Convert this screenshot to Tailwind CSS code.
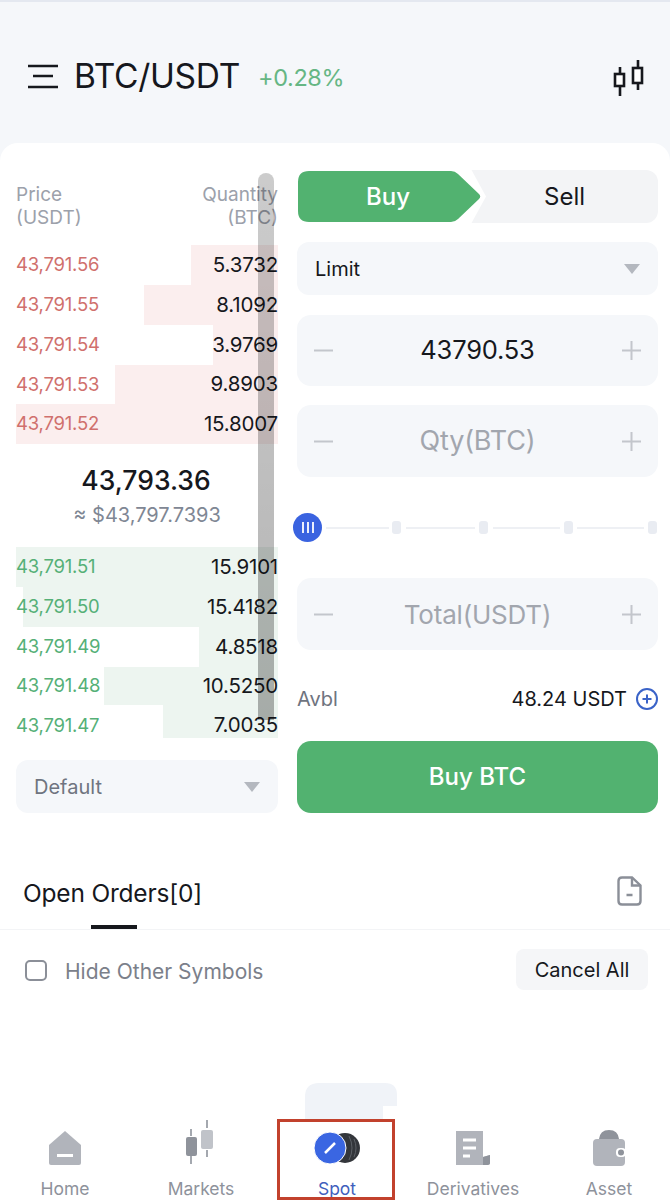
<!DOCTYPE html>
<html lang="en">
<head>
  <meta charset="UTF-8">
  <meta name="viewport" content="width=device-width,initial-scale=1.0">
  <title>BTC/USDT Spot</title>
  <script src="https://cdn.jsdelivr.net/npm/@tailwindcss/browser@4"></script>
</head>
<body class="bg-white font-['Inter',sans-serif] text-[#16181d]">
<div class="relative w-[670px] h-[1200px] overflow-hidden bg-[#f5f7fa]">

  <!-- header -->
  <header class="h-[148px] flex items-start pt-[56px] border-t-2 border-[#e4e8f0]">
    <svg class="ml-[27px] mt-[5px] w-[32px] h-[26px]" viewBox="0 0 32 26" fill="none" stroke="#16181d" stroke-width="2.6">
      <path d="M1 3H31M6 13H26M1 24H31"/>
    </svg>
    <h1 class="ml-[15px] text-[33.5px] leading-[36px] tracking-[-0.3px]">BTC/USDT</h1>
    <span class="ml-[18px] mt-[4px] text-[23.5px] leading-[32px] text-[#66b684] tracking-[-0.4px]">+0.28%</span>
    <svg class="ml-auto mr-[24px] mt-[2px] w-[34px] h-[36px]" viewBox="0 0 34 36" fill="none" stroke="#16181d" stroke-width="2.6">
      <path d="M8 7V14M8 27V36M26 0V7M26 24V30"/>
      <rect x="3" y="14" width="9" height="12" fill="#fff"/>
      <rect x="21" y="8" width="9" height="15" fill="#fff"/>
    </svg>
  </header>

  <!-- main card -->
  <main class="bg-white rounded-t-[18px] h-[1060px] -mt-[5px]">
    <div class="flex pt-[27px] pl-[16px]">
      <!-- order book -->
      <section class="w-[262px]">
        <div class="flex justify-between text-[19px] leading-[23px] text-[#9ca1ab] h-[75px] pt-[13px]">
          <div>Price<br>(USDT)</div>
          <div class="text-right">Quantity<br>(BTC)</div>
        </div>
        <div class="text-[20.5px] tracking-[-0.2px]">
          <div class="relative h-[40px] flex items-center justify-between"><i class="absolute inset-y-0 right-0 w-[87px] bg-[#fbeeee]"></i><span class="relative text-[18.5px] text-[#d0706d]">43,791.56</span><span class="relative">5.3732</span></div>
          <div class="relative h-[40px] flex items-center justify-between"><i class="absolute inset-y-0 right-0 w-[134px] bg-[#fbeeee]"></i><span class="relative text-[18.5px] text-[#d0706d]">43,791.55</span><span class="relative">8.1092</span></div>
          <div class="relative h-[40px] flex items-center justify-between"><i class="absolute inset-y-0 right-0 w-[65px] bg-[#fbeeee]"></i><span class="relative text-[18.5px] text-[#d0706d]">43,791.54</span><span class="relative">3.9769</span></div>
          <div class="relative h-[39px] flex items-center justify-between"><i class="absolute inset-y-0 right-0 w-[163px] bg-[#fbeeee]"></i><span class="relative text-[18.5px] text-[#d0706d]">43,791.53</span><span class="relative">9.8903</span></div>
          <div class="relative h-[40px] flex items-center justify-between"><i class="absolute inset-y-0 right-0 w-[262px] bg-[#fbeeee]"></i><span class="relative text-[18.5px] text-[#d0706d]">43,791.52</span><span class="relative">15.8007</span></div>
        </div>
        <div class="h-[103px] flex flex-col items-center pt-[18px]">
          <div class="text-[26.5px] leading-[36px] font-medium -ml-[2px]">43,793.36</div>
          <div class="text-[20px] leading-[26px] mt-[4px] text-[#7f8794]">≈ $43,797.7393</div>
        </div>
        <div class="text-[20.5px] tracking-[-0.2px]">
          <div class="relative h-[40px] flex items-center justify-between"><i class="absolute inset-y-0 right-0 w-[262px] bg-[#edf5f0]"></i><span class="relative text-[18.5px] text-[#55b077]">43,791.51</span><span class="relative">15.9101</span></div>
          <div class="relative h-[40px] flex items-center justify-between"><i class="absolute inset-y-0 right-0 w-[255px] bg-[#edf5f0]"></i><span class="relative text-[18.5px] text-[#55b077]">43,791.50</span><span class="relative">15.4182</span></div>
          <div class="relative h-[40px] flex items-center justify-between"><i class="absolute inset-y-0 right-0 w-[79px] bg-[#edf5f0]"></i><span class="relative text-[18.5px] text-[#55b077]">43,791.49</span><span class="relative">4.8518</span></div>
          <div class="relative h-[38px] flex items-center justify-between"><i class="absolute inset-y-0 right-0 w-[174px] bg-[#edf5f0]"></i><span class="relative text-[18.5px] text-[#55b077]">43,791.48</span><span class="relative">10.5250</span></div>
          <div class="relative h-[33px] flex items-center justify-between"><i class="absolute inset-y-0 right-0 w-[115px] bg-[#edf5f0]"></i><span class="relative mt-[8px] text-[18.5px] text-[#55b077]">43,791.47</span><span class="relative mt-[8px]">7.0035</span></div>
        </div>
        <div class="mt-[22px] h-[53px] rounded-[12px] bg-[#f5f7fa] flex items-center justify-between px-[18px] text-[20px] text-[#6f7480]">
          <span>Default</span>
          <svg class="w-[16px] h-[10px]" viewBox="0 0 16 10"><path d="M0 0H16L8 10Z" fill="#b4b8bf"/></svg>
        </div>
      </section>

      <!-- trade form -->
      <section class="ml-[19px] w-[361px]">
        <div class="relative flex h-[53px] text-[24px]">
          <div class="relative z-10 w-[186px] flex items-center justify-center pr-[4px] text-white font-medium">
            <svg class="absolute inset-0 w-[186px] h-[53px]" viewBox="0 0 186 53" fill="none"><path d="M12 1H154Q158 1 161 4L182 24Q184.500 26.500 182 29L161 49Q158 52 154 52H12Q1 52 1 41V12Q1 1 12 1Z" fill="#52b270"/></svg>
            <span class="relative">Buy</span>
          </div>
          <div class="flex-1 -ml-[12px] rounded-r-[12px] bg-[#f3f4f6] relative flex items-center justify-center">
            <svg class="absolute left-0 top-0 w-[15px] h-[53px]" viewBox="0 0 15 53"><path d="M0 0H0.500L15 26.500L0.500 53H0Z" fill="#fff"/></svg>
            <span class="relative">Sell</span>
          </div>
        </div>

        <div class="mt-[19px] h-[53px] rounded-[12px] bg-[#f5f7fa] flex items-center justify-between pl-[18px] pr-[18px] text-[20px]">
          <span>Limit</span>
          <svg class="w-[16px] h-[10px]" viewBox="0 0 16 10"><path d="M0 0H16L8 10Z" fill="#b4b8bf"/></svg>
        </div>

        <div class="mt-[20px] h-[71px] rounded-[14px] bg-[#f5f7fa] flex items-center justify-between px-[17px]">
          <svg class="w-[19px] h-[19px]" viewBox="0 0 19 19" stroke="#c3c6cc" stroke-width="2"><path d="M0 9.500H19"/></svg>
          <span class="text-[25.5px] tracking-[-0.2px]">43790.53</span>
          <svg class="w-[19px] h-[19px]" viewBox="0 0 19 19" stroke="#c3c6cc" stroke-width="2"><path d="M0 9.500H19M9.500 0V19"/></svg>
        </div>

        <div class="mt-[19px] h-[72px] rounded-[14px] bg-[#f5f7fa] flex items-center justify-between px-[17px]">
          <svg class="w-[19px] h-[19px]" viewBox="0 0 19 19" stroke="#c3c6cc" stroke-width="2"><path d="M0 9.500H19"/></svg>
          <span class="text-[27px] tracking-[-0.2px] text-[#a2a6ae]">Qty(BTC)</span>
          <svg class="w-[19px] h-[19px]" viewBox="0 0 19 19" stroke="#c3c6cc" stroke-width="2"><path d="M0 9.500H19M9.500 0V19"/></svg>
        </div>

        <!-- slider -->
        <div class="relative mt-[36px] h-[29px] -ml-[4px] flex items-center">
          <div class="w-[29px] h-[29px] rounded-full bg-[#3a63e0] flex items-center justify-center gap-[3px] shrink-0">
            <i class="w-[2px] h-[11px] bg-white/90"></i><i class="w-[2px] h-[11px] bg-white/90"></i><i class="w-[2px] h-[11px] bg-white/90"></i>
          </div>
          <div class="ml-[4px] w-[63px] h-[2px] bg-[#eef0f4]"></div>
          <div class="ml-[3px] w-[9px] h-[13px] rounded-[3px] bg-[#e9ecf2]"></div>
          <div class="ml-[5px] w-[69px] h-[2px] bg-[#eef0f4]"></div>
          <div class="ml-[4px] w-[9px] h-[13px] rounded-[3px] bg-[#e9ecf2]"></div>
          <div class="ml-[5px] w-[67px] h-[2px] bg-[#eef0f4]"></div>
          <div class="ml-[4px] w-[9px] h-[13px] rounded-[3px] bg-[#e9ecf2]"></div>
          <div class="ml-[4px] w-[67px] h-[2px] bg-[#eef0f4]"></div>
          <div class="ml-[4px] w-[9px] h-[13px] rounded-[3px] bg-[#e9ecf2]"></div>
        </div>

        <div class="mt-[36px] h-[72px] rounded-[14px] bg-[#f5f7fa] flex items-center justify-between px-[17px]">
          <svg class="w-[19px] h-[19px]" viewBox="0 0 19 19" stroke="#c3c6cc" stroke-width="2"><path d="M0 9.500H19"/></svg>
          <span class="text-[26px] tracking-[-0.2px] text-[#a2a6ae]">Total(USDT)</span>
          <svg class="w-[19px] h-[19px]" viewBox="0 0 19 19" stroke="#c3c6cc" stroke-width="2"><path d="M0 9.500H19M9.500 0V19"/></svg>
        </div>

        <div class="mt-[35px] h-[28px] flex items-center text-[20px]">
          <span class="text-[#6f7480]">Avbl</span>
          <span class="ml-auto">48.24 USDT</span>
          <svg class="ml-[9px] w-[22px] h-[22px]" viewBox="0 0 22 22" fill="none" stroke="#3a63c8" stroke-width="2"><circle cx="11" cy="11" r="10"/><path d="M6.500 11H15.500M11 6.500V15.500"/></svg>
        </div>

        <div class="mt-[28px] h-[72px] rounded-[14px] bg-[#52b270] flex items-center justify-center text-[24px] font-medium text-white">Buy BTC</div>
      </section>
    </div>

    <!-- open orders -->
    <div class="mt-[48px] h-[69px] flex items-start justify-between pl-[23px] pr-[28px] border-b border-[#f3f4f6] relative">
      <span class="text-[24.5px] leading-[36px] mt-[14px] tracking-[-0.2px]">Open Orders[0]</span>
      <svg class="mt-[15px] w-[25px] h-[30px]" viewBox="0 0 25 30" fill="none" stroke="#8b8f98" stroke-width="2.400">
        <path d="M5 1.500H15L23.500 9.500V25Q23.500 28.500 20 28.500H5Q1.500 28.500 1.500 25V5Q1.500 1.500 5 1.500Z"/>
        <path d="M15 1.500V9.500H23.500M9.500 19H15.500"/>
      </svg>
      <i class="absolute left-[91px] bottom-[0px] w-[46px] h-[4px] bg-[#16181d]"></i>
    </div>
    <div class="flex items-center pl-[25px] pr-[22px] mt-[19px]">
      <div class="w-[22px] h-[21px] mt-[2px] rounded-[5px] border-2 border-[#8b8f98]"></div>
      <span class="ml-[18px] mt-[4px] text-[21px] text-[#7b808a]">Hide Other Symbols</span>
      <div class="ml-auto w-[132px] h-[41px] rounded-[8px] bg-[#f5f6f8] flex items-center justify-center text-[20px]">Cancel All</div>
    </div>
  </main>

  <!-- scrollbar over the order book -->
  <div class="absolute left-[258px] top-[173px] w-[16px] h-[547px] rounded-t-[8px] bg-linear-to-b from-black/20 to-black/30"></div>

  <!-- faded card behind the tab bar -->
  <svg class="absolute left-[305px] top-[1083px] w-[92px] h-[37px]" viewBox="0 0 92 37"><path d="M0 37V14Q0 0 14 0H80Q92 0 92 12V23H78V37Z" fill="#f0f3f8"/></svg>

  <!-- tab bar -->
  <nav class="absolute -left-[3px] w-[680px] bottom-0 h-[70px] grid grid-cols-5 text-[17.5px] text-[#8e929b] text-center">
    <div class="flex flex-col items-center">
      <svg class="w-[34px] h-[36px]" viewBox="0 0 34 36"><path d="M17 1L33 15V33Q33 35 31 35H3Q1 35 1 33V15Z" fill="#b1b4bb"/><rect x="9" y="24" width="16" height="3" fill="#fff"/></svg>
      <span class="mt-[10px]">Home</span>
    </div>
    <div class="flex flex-col items-center">
      <svg class="w-[30px] h-[46px] -mt-[10px]" viewBox="0 0 30 46"><path d="M5 9V16M5 36V44M21 0V8M21 30V37" stroke="#a4a8af" stroke-width="2"/><rect x="0" y="17" width="11" height="19" rx="2" fill="#8f939b"/><rect x="15" y="10" width="12" height="19" rx="2" fill="#c0c3c9"/></svg>
      <span class="mt-[10px]">Markets</span>
    </div>
    <div class="flex flex-col items-center text-[#3f5fbd]">
      <svg class="w-[48px] h-[36px]" viewBox="0 0 48 36"><circle cx="32" cy="18" r="15" fill="#33363b"/><path d="M36 6Q42 18 36 30M41 9Q45 18 41 27" fill="none" stroke="#5c6066" stroke-width="1"/><circle cx="17" cy="18" r="16" fill="#3a66e2" stroke="#fff" stroke-width="1"/><path d="M12 23L22 13" stroke="#fff" stroke-width="2.500"/></svg>
      <span class="mt-[10px]">Spot</span>
    </div>
    <div class="flex flex-col items-center">
      <svg class="w-[36px] h-[36px]" viewBox="0 0 36 36"><path d="M1 1H28V27L35 25V33Q35 35 33 35H1Z" fill="#b1b4bb"/><path d="M28 27L35 25V33Q35 35 31 35H28Z" fill="#8f939b"/><path d="M8 10H21M8 18H21M8 26H15" stroke="#fff" stroke-width="3"/></svg>
      <span class="mt-[10px]">Derivatives</span>
    </div>
    <div class="flex flex-col items-center">
      <svg class="w-[34px] h-[38px] -mt-[1px]" viewBox="0 0 34 38"><path d="M7 10Q8 1 17 1Q26 1 27 10Z" fill="#8f939b"/><rect x="1" y="10" width="32" height="27" rx="4" fill="#b1b4bb"/><rect x="24" y="19" width="10" height="9" rx="4" fill="#fff"/><circle cx="29" cy="23.500" r="3" fill="#8f939b"/></svg>
      <span class="mt-[9px]">Asset</span>
    </div>
  </nav>

  <!-- highlight around the Spot tab -->
  <div class="absolute left-[277px] top-[1119px] w-[118px] h-[81px] border-[3px] border-[#c2412d] pointer-events-none"></div>
</div>
</body>
</html>
